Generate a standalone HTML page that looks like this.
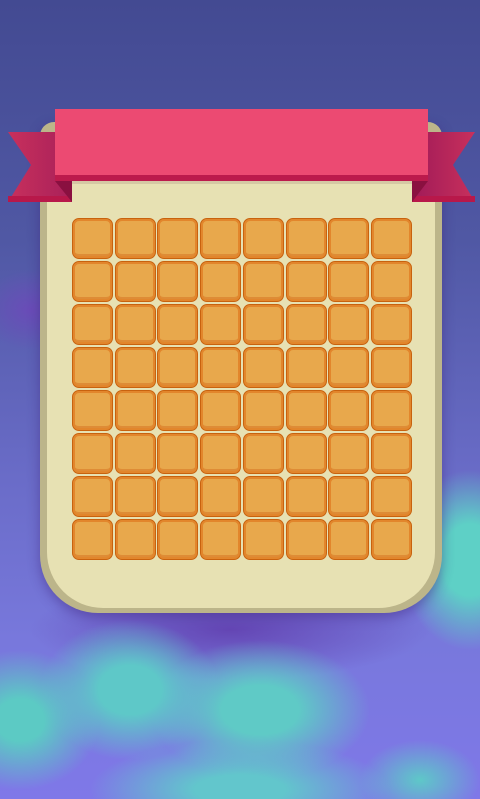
<!DOCTYPE html>
<html><head><meta charset="utf-8"><style>
html,body{margin:0;padding:0}
body{width:480px;height:799px;overflow:hidden;position:relative;font-family:"Liberation Sans",sans-serif;
background:
radial-gradient(ellipse 70px 90px at 470px 560px,#5ed0c6 0%,#5ed0c6 40%,rgba(95,207,198,0) 100%),
radial-gradient(ellipse 90px 70px at 130px 690px,#5ec8c8 0%,#5ec8c8 35%,rgba(94,200,200,0) 100%),
radial-gradient(ellipse 110px 70px at 260px 710px,#5fcac6 0%,#5fcac6 35%,rgba(95,202,198,0) 100%),
radial-gradient(ellipse 80px 70px at 20px 720px,#5ccac4 0%,#5ccac4 30%,rgba(92,202,196,0) 100%),
radial-gradient(ellipse 150px 50px at 240px 790px,#62c6cc 0%,#62c6cc 30%,rgba(98,198,204,0) 100%),
radial-gradient(ellipse 60px 40px at 420px 780px,#5ec8c8 0%,rgba(94,200,200,0) 100%),
radial-gradient(ellipse 50px 40px at 30px 310px,#6a4cb8 0%,rgba(106,76,184,0) 100%),
radial-gradient(ellipse 200px 50px at 230px 630px,#6446b4 0%,rgba(100,70,180,0) 100%),
linear-gradient(#434a92 0%,#5058a4 30%,#6a6cc8 60%,#7878dc 80%,#7f78e8 100%);}
.card{position:absolute;left:40px;top:122px;width:402px;height:491px;background:#bcb58a;border-radius:14px 14px 58px 58px;box-shadow:0 4px 12px rgba(60,30,120,.45)}
.inner{position:absolute;left:47px;top:150px;width:388px;height:458px;background:#e7e1b3;border-radius:0 0 56px 56px}
.t{position:absolute;width:39px;height:39px;background:#e8a84c;border:1px solid #c8620e;border-radius:7px;box-shadow:inset 0 0 0 2px #e2862c,inset 0 -4px 0 #de8c36}
</style></head><body>
<div class="card"></div>
<div class="inner"></div>
<svg width="480" height="220" style="position:absolute;left:0;top:0">
<defs>
<linearGradient id="gl" x1="0" x2="1"><stop offset="0" stop-color="#c8305c"/><stop offset="1" stop-color="#a8205a"/></linearGradient>
<linearGradient id="gr" x1="1" x2="0"><stop offset="0" stop-color="#c8305c"/><stop offset="1" stop-color="#a01a58"/></linearGradient>
</defs>
<polygon points="8,132 72,132 72,202 8,202 31,165" fill="url(#gl)"/>
<polygon points="8,196 72,196 72,202 8,202" fill="#b8184a"/>
<polygon points="55,181 72,181 72,202" fill="#8a1040"/>
<polygon points="475,132 412,132 412,202 475,202 453,165" fill="url(#gr)"/>
<polygon points="412,196 475,196 475,202 412,202" fill="#b8184a"/>
<polygon points="428,181 412,181 412,202" fill="#8a1040"/>
<rect x="55" y="109" width="373" height="72" fill="#ec4a72"/>
<rect x="55" y="175" width="373" height="6" fill="#bc1a4c"/>
<rect x="72" y="181" width="340" height="3" fill="#c9b89a" opacity=".6"/>
</svg>
<div id="g"></div>
<script>
var h='';for(var r=0;r<8;r++)for(var c=0;c<8;c++){h+='<div class="t" style="left:'+Math.round(72+c*42.7)+'px;top:'+(218+r*43)+'px"></div>';}
document.getElementById('g').innerHTML=h;
</script>
</body></html>
